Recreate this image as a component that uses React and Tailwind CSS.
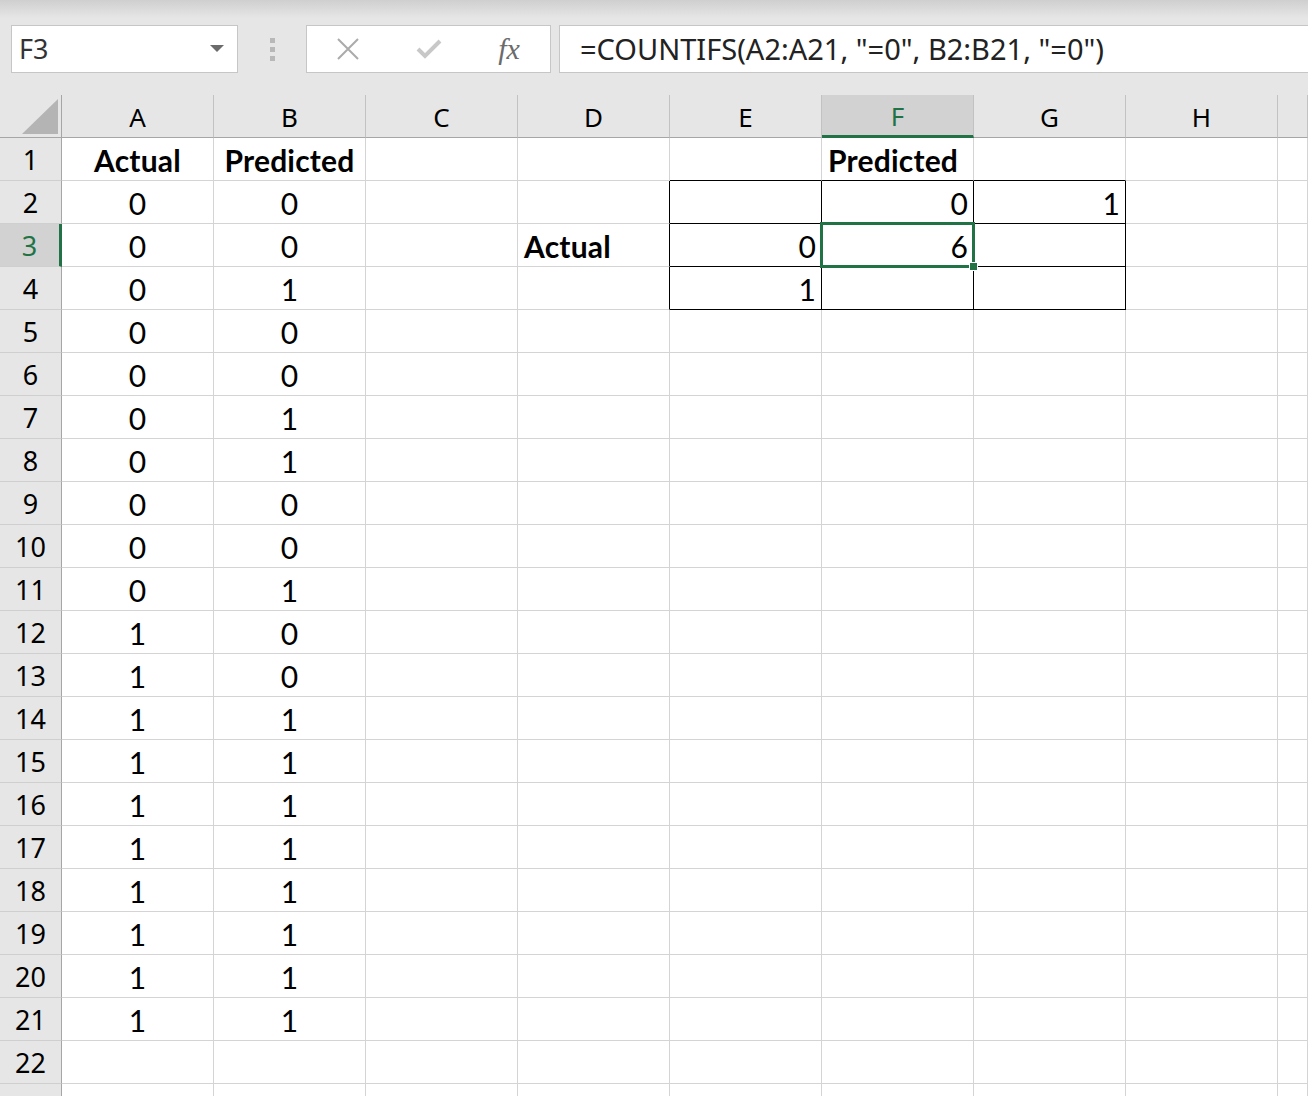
import React from 'react';

const COLS = ['A', 'B', 'C', 'D', 'E', 'F', 'G', 'H', 'I'];
const actual = [0, 0, 0, 0, 0, 0, 0, 0, 0, 0, 1, 1, 1, 1, 1, 1, 1, 1, 1, 1];
const predicted = [0, 0, 1, 0, 0, 1, 1, 0, 0, 1, 0, 0, 1, 1, 1, 1, 1, 1, 1, 1];

const cellFont = { fontFamily: 'Lato, "Liberation Sans", sans-serif' };
const uiFont = { fontFamily: '"Noto Sans", "Open Sans", sans-serif' };

// the confusion matrix block E2:G4 has black borders
const boxed = (col, row) => {
  const inBox = ['E', 'F', 'G'].includes(col) && row >= 2 && row <= 4;
  const aboveBox = ['E', 'F', 'G'].includes(col) && row === 1;
  const leftOfBox = col === 'D' && row >= 2 && row <= 4;
  return {
    r: inBox || leftOfBox,
    b: inBox || aboveBox,
  };
};

const cellValue = (col, row) => {
  if (row === 1 && col === 'A') return { text: 'Actual', bold: true, align: 'center' };
  if (row === 1 && col === 'B') return { text: 'Predicted', bold: true, align: 'center' };
  if (row === 1 && col === 'F') return { text: 'Predicted', bold: true, align: 'left' };
  if (row === 3 && col === 'D') return { text: 'Actual', bold: true, align: 'left' };
  if (row >= 2 && row <= 21 && col === 'A') return { text: actual[row - 2], align: 'center' };
  if (row >= 2 && row <= 21 && col === 'B') return { text: predicted[row - 2], align: 'center' };
  if (row === 2 && col === 'F') return { text: 0, align: 'right' };
  if (row === 2 && col === 'G') return { text: 1, align: 'right' };
  if (row === 3 && col === 'E') return { text: 0, align: 'right' };
  if (row === 3 && col === 'F') return { text: 6, align: 'right' };
  if (row === 4 && col === 'E') return { text: 1, align: 'right' };
  return null;
};

const Cell = ({ col, row }) => {
  const v = cellValue(col, row);
  const bd = boxed(col, row);
  const selected = col === 'F' && row === 3;
  const spill = selected || (col === 'F' && row === 1);
  const align =
    v?.align === 'center' ? 'justify-center' : v?.align === 'right' ? 'justify-end pr-[5px]' : 'justify-start pl-[6px]';
  return (
    <div
      className={`relative flex items-center whitespace-nowrap bg-white text-[30px] tracking-[0.2px] text-black pt-[2px] border-r border-b ${
        bd.r ? 'border-r-black' : 'border-r-[#d4d4d4]'
      } ${bd.b ? 'border-b-black' : 'border-b-[#d4d4d4]'} ${align} ${v?.bold ? 'font-bold' : ''} ${
        spill ? 'overflow-visible z-10' : 'overflow-hidden'
      }`}
      style={cellFont}
    >
      {v && <span>{v.text}</span>}
      {selected && (
        <>
          <div className="absolute -top-[2px] -left-[2px] w-[155px] h-[46px] border-[3px] border-[#217346]" />
          <div className="absolute -right-[5px] -bottom-[5px] w-[9px] h-[9px] bg-[#217346] border border-white" />
        </>
      )}
    </div>
  );
};

const FormulaBar = () => (
  <div className="h-[95px] bg-gradient-to-b from-[#cfcfcf] to-[#e6e6e6] bg-[length:100%_18px] bg-no-repeat bg-[#e6e6e6] flex items-start pt-[25px] pl-[11px]">
    <div className="w-[227px] h-[48px] bg-white border border-[#c6c6c6] flex items-center justify-between pl-[7px] pr-[13px]" style={uiFont}>
      <span className="text-[27px] text-[#333]">F3</span>
      <svg width="14" height="8" viewBox="0 0 14 8">
        <path d="M0 0 H14 L7 7 Z" fill="#6b6b6b" />
      </svg>
    </div>
    <div className="w-[68px] h-[48px] flex flex-col items-center justify-center gap-[4px]">
      <div className="w-[5px] h-[5px] bg-[#b8b8b8]" />
      <div className="w-[5px] h-[5px] bg-[#b8b8b8]" />
      <div className="w-[5px] h-[5px] bg-[#b8b8b8]" />
    </div>
    <div className="w-[245px] h-[48px] bg-white border border-[#c6c6c6] flex items-center">
      <div className="w-[82px] flex justify-center">
        <svg width="24" height="24" viewBox="0 0 24 24">
          <path d="M2 2 L22 22 M22 2 L2 22" stroke="#ababab" strokeWidth="2" fill="none" />
        </svg>
      </div>
      <div className="w-[80px] flex justify-center">
        <svg width="26" height="22" viewBox="0 0 26 22">
          <path d="M2 11 L9 18 L24 3" stroke="#c8c8c8" strokeWidth="4" fill="none" />
        </svg>
      </div>
      <div className="w-[80px] flex justify-center">
        <span className="italic text-[30px] text-[#6b6b6b] leading-none" style={{ fontFamily: '"Liberation Serif", "DejaVu Serif", serif' }}>
          fx
        </span>
      </div>
    </div>
    <div className="ml-[8px] flex-1 h-[48px] bg-white border border-[#c6c6c6] border-r-0 flex items-center pl-[20px]" style={uiFont}>
      <span className="text-[29px] text-[#222]">=COUNTIFS(A2:A21, "=0", B2:B21, "=0")</span>
    </div>
  </div>
);

export default function App() {
  const rows = Array.from({ length: 23 }, (_, i) => i + 1);
  return (
    <div className="w-[1308px] h-[1096px] overflow-hidden bg-[#e6e6e6]">
      <FormulaBar />
      <div className="grid grid-cols-[62px_repeat(8,152px)_30px] auto-rows-[43px]">
        <div className="relative bg-[#e6e6e6] border-r border-b border-[#a6a6a6]">
          <svg className="absolute left-[22px] top-[4px]" width="36" height="35" viewBox="0 0 36 35">
            <path d="M36 0 V35 H0 Z" fill="#b4b4b4" />
          </svg>
        </div>
        {COLS.map((c) => (
          <div
            key={c}
            className={`flex items-center justify-center pt-[2px] text-[26px] border-r border-r-[#c2c2c2] ${
              c === 'F'
                ? 'bg-[#d2d2d2] text-[#217346] border-b-[3px] border-b-[#217346]'
                : 'bg-[#e6e6e6] text-black border-b border-b-[#a6a6a6]'
            }`}
            style={uiFont}
          >
            {c !== 'I' && c}
          </div>
        ))}
        {rows.map((r) => (
          <React.Fragment key={r}>
            <div
              className={`flex items-center justify-center pt-[2px] text-[27px] border-b border-b-[#cfcfcf] ${
                r === 3
                  ? 'bg-[#d2d2d2] text-[#217346] border-r-[3px] border-r-[#217346]'
                  : 'bg-[#e6e6e6] text-black border-r border-r-[#a6a6a6]'
              }`}
              style={uiFont}
            >
              {r <= 22 && r}
            </div>
            {COLS.map((c) => (
              <Cell key={c} col={c} row={r} />
            ))}
          </React.Fragment>
        ))}
      </div>
    </div>
  );
}
